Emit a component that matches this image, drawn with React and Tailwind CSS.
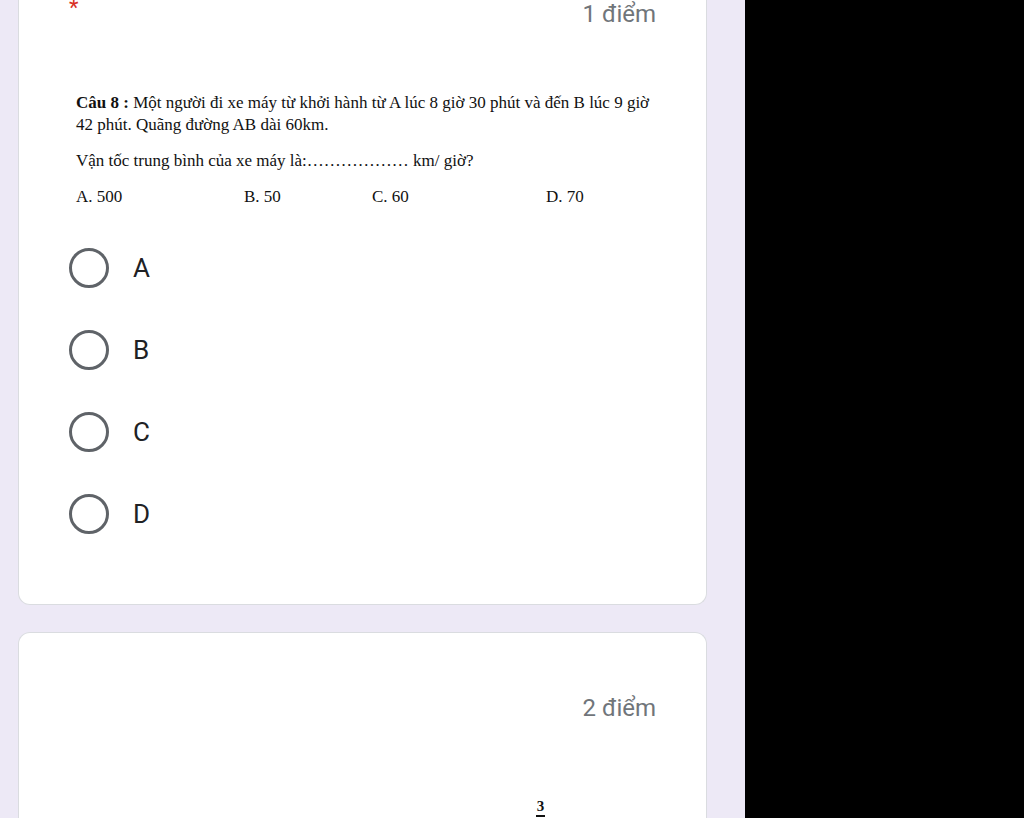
export default function App() {
  const serif = { fontFamily: '"Liberation Serif", "Times New Roman", serif' };
  const roboto = { fontFamily: 'Roboto, "Noto Sans", sans-serif' };
  const opts = ["A", "B", "C", "D"];
  return (
    <div className="w-[1024px] h-[818px] flex overflow-hidden bg-black">
      <div className="w-[745px] h-full bg-[#ede9f6] px-[18px] flex flex-col">
        <div className="w-[689px] h-[605px] shrink-0 bg-white border border-t-0 border-[#dadce0] rounded-b-[12px] relative">
          <span className="absolute left-[50px] top-[-3px] text-[#d93025] text-[22px] leading-none" style={roboto}>*</span>
          <div className="flex justify-end pr-[50px]">
            <span className="text-[24px] leading-[28px] text-[#70757a]" style={roboto}>1 điểm</span>
          </div>
          <div className="pl-[57px] pt-[64px] text-[17px] text-[#111] leading-[22px]" style={serif}>
            <p className="whitespace-nowrap">
              <b>Câu 8 :</b> Một người đi xe máy từ khởi hành từ A lúc 8 giờ 30 phút và đến B lúc 9 giờ
            </p>
            <p>42 phút. Quãng đường AB dài 60km.</p>
            <p className="mt-[14px]">Vận tốc trung bình của xe máy là:……………… km/ giờ?</p>
            <div className="flex mt-[14px]">
              <span className="w-[168px]">A. 500</span>
              <span className="w-[128px]">B. 50</span>
              <span className="w-[174px]">C. 60</span>
              <span>D. 70</span>
            </div>
          </div>
          <div className="pl-[50px] pt-[40px] flex flex-col gap-[42px]">
            {opts.map((o) => (
              <div key={o} className="flex items-center h-[40px]">
                <div className="w-[40px] h-[40px] rounded-full border-[3px] border-[#5f6368] shrink-0" />
                <span className="ml-[24px] text-[26px] text-[#202124] leading-none" style={roboto}>{o}</span>
              </div>
            ))}
          </div>
        </div>
        <div className="w-[689px] mt-[27px] flex-1 bg-white border border-b-0 border-[#dadce0] rounded-t-[12px]">
          <div className="flex justify-end pr-[50px] pt-[61px]">
            <span className="text-[24px] leading-[28px] text-[#70757a]" style={roboto}>2 điểm</span>
          </div>
          <div className="pl-[517px] pt-[76px] flex flex-col items-start" style={serif}>
            <div className="flex flex-col items-center">
              <span className="text-[15px] font-bold leading-[16px] text-[#111]">3</span>
              <div className="w-[9px] h-[2px] bg-[#111] mt-[1px]" />
            </div>
          </div>
        </div>
      </div>
      <div className="flex-1 bg-black" />
    </div>
  );
}
